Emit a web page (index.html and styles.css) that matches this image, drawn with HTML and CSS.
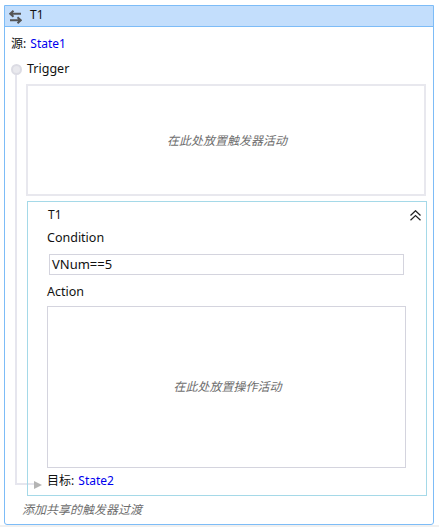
FILE: index.html
```html
<!DOCTYPE html>
<html lang="zh-CN">
<head>
    <meta charset="UTF-8">
    <meta name="viewport" content="width=device-width, initial-scale=1.0">
    <title>T1</title>
    <link rel="stylesheet" href="styles.css">
</head>
<body>
    <div class="transition">
        <div class="title-bar">
            <svg class="title-icon" width="13" height="14" viewBox="0 0 13 14">
                <path d="M4.5 0.8 L1.2 3.8 L4.5 6.8 M1.2 3.8 H12" fill="none" stroke="#555" stroke-width="2"/>
                <path d="M8.5 7.2 L11.8 10.2 L8.5 13.2 M11.8 10.2 H1" fill="none" stroke="#555" stroke-width="2"/>
            </svg>
            <span>T1</span>
        </div>

        <div class="content">
            <div class="source">源: <a class="state">State1</a></div>

            <!-- connector from trigger to target -->
            <div class="connector"></div>
            <div class="dot"></div>
            <div class="arrow"></div>

            <div class="trigger-label">Trigger</div>
            <div class="drop-box trigger-drop">在此处放置触发器活动</div>

            <div class="panel">
                <div class="panel-head">
                    <span class="panel-name">T1</span>
                    <svg width="11" height="11" viewBox="0 0 11 11">
                        <path d="M0.5 5.5 L5.5 0.7 L10.5 5.5 M0.5 10.3 L5.5 5.5 L10.5 10.3" fill="none" stroke="#222" stroke-width="1.2"/>
                    </svg>
                </div>
                <div class="field-label condition-label">Condition</div>
                <div class="condition">VNum==5</div>
                <div class="field-label action-label">Action</div>
                <div class="drop-box action-drop">在此处放置操作活动</div>
                <div class="target">目标: <a class="state">State2</a></div>
            </div>

            <div class="add-shared">添加共享的触发器过渡</div>
        </div>
    </div>
</body>
</html>
```

FILE: styles.css
```css
* {
    margin: 0;
    padding: 0;
    box-sizing: border-box;
}

html, body {
    height: 100%;
}

html {
    background: linear-gradient(to bottom, white 525px, #f0f0f0 525px);
}

body {
    font-family: "Noto Sans", "Noto Sans CJK SC", sans-serif;
    font-size: 12px;
    line-height: 16px;
    color: #111;
    padding: 5px 5px 0 4px;
    overflow: hidden;
}

/* Outer box */
.transition {
    height: 520px;
    border: 1px solid #7dbcf7;
    border-radius: 0 0 3px 3px;
    background: white;
}

.title-bar {
    height: 21px;
    display: flex;
    align-items: center;
    gap: 8px;
    padding: 0 0 2px 4px;
    background: #c3defc;
    border-bottom: 1px solid #7dbcf7;
}

.title-icon {
    margin-top: 3px;
}

.content {
    position: relative;
    padding: 9px 7px 0 21px;
}

.state {
    color: #0000ee;
}

.source {
    margin-left: -15px;
    word-spacing: 1px;
}

.trigger-label {
    margin: 9px 0 0 1px;
    font-size: 12.5px;
}

/* Connector */
.connector {
    position: absolute;
    left: 10px;
    top: 48px;
    width: 20px;
    height: 410px;
    border-left: 2px solid #e6e6ee;
    border-bottom: 2px solid #e6e6ee;
}

.dot {
    position: absolute;
    left: 6px;
    top: 37px;
    width: 11px;
    height: 11px;
    border: 2px solid #dcdce4;
    border-radius: 50%;
    background: #e9e9ee;
}

.arrow {
    position: absolute;
    left: 29px;
    top: 454px;
    border-left: 8px solid #b4b4b4;
    border-top: 4px solid transparent;
    border-bottom: 4px solid transparent;
}

/* Drop areas */
.drop-box {
    display: flex;
    align-items: center;
    justify-content: center;
    font-style: italic;
    color: #6e6e6e;
    background: white;
}

.trigger-drop {
    height: 112px;
    margin-top: 7px;
    padding: 1px 0 0 2px;
    border: 2px solid #e8e8ee;
}

.action-drop {
    height: 162px;
    width: 359px;
    margin-top: 6px;
    padding-left: 2px;
    border: 1px solid #d4d4de;
}

/* T1 panel */
.panel {
    position: relative;
    height: 295px;
    margin: 5px -1px 0 1px;
    padding: 5px 20px 0 19px;
    border: 1px solid #a5d9e8;
}

.panel-head {
    display: flex;
    justify-content: space-between;
    align-items: center;
    height: 16px;
    margin-right: -15px;
}

.panel-name {
    margin-left: 1px;
}

.field-label {
    font-size: 12.5px;
}

.condition-label {
    margin-top: 7px;
}

.action-label {
    margin-top: 9px;
}

.condition {
    width: 355px;
    height: 21px;
    margin: 8px 0 0 2px;
    padding-left: 2px;
    font-size: 13px;
    line-height: 19px;
    border: 1px solid #d4d4de;
}

.target {
    margin-top: 5px;
    word-spacing: 1px;
}

.add-shared {
    margin: 6px 0 0 -4px;
    font-style: italic;
    color: #6e6e6e;
}
```
